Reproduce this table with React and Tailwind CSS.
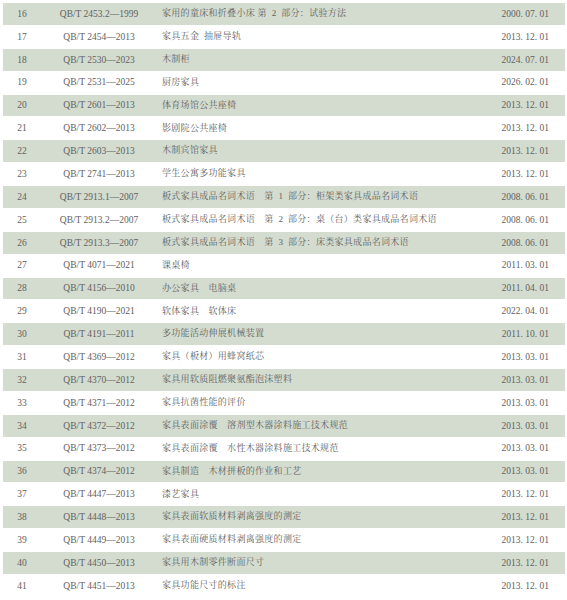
const S = "\u2002";
const rows = [
  ["16", "QB/T 2453.2—1999", `家用的童床和折叠小床 第${S}2${S}部分：试验方法`, "2000. 07. 01"],
  ["17", "QB/T 2454—2013", `家具五金${S}抽屉导轨`, "2013. 12. 01"],
  ["18", "QB/T 2530—2023", "木制柜", "2024. 07. 01"],
  ["19", "QB/T 2531—2025", "厨房家具", "2026. 02. 01"],
  ["20", "QB/T 2601—2013", "体育场馆公共座椅", "2013. 12. 01"],
  ["21", "QB/T 2602—2013", "影剧院公共座椅", "2013. 12. 01"],
  ["22", "QB/T 2603—2013", "木制宾馆家具", "2013. 12. 01"],
  ["23", "QB/T 2741—2013", "学生公寓多功能家具", "2013. 12. 01"],
  ["24", "QB/T 2913.1—2007", `板式家具成品名词术语　第${S}1${S}部分：柜架类家具成品名词术语`, "2008. 06. 01"],
  ["25", "QB/T 2913.2—2007", `板式家具成品名词术语　第${S}2${S}部分：桌（台）类家具成品名词术语`, "2008. 06. 01"],
  ["26", "QB/T 2913.3—2007", `板式家具成品名词术语　第${S}3${S}部分：床类家具成品名词术语`, "2008. 06. 01"],
  ["27", "QB/T 4071—2021", "课桌椅", "2011. 03. 01"],
  ["28", "QB/T 4156—2010", "办公家具　电脑桌", "2011. 04. 01"],
  ["29", "QB/T 4190—2021", "软体家具　软体床", "2022. 04. 01"],
  ["30", "QB/T 4191—2011", "多功能活动伸展机械装置", "2011. 10. 01"],
  ["31", "QB/T 4369—2012", "家具（板材）用蜂窝纸芯", "2013. 03. 01"],
  ["32", "QB/T 4370—2012", "家具用软质阻燃聚氨酯泡沫塑料", "2013. 03. 01"],
  ["33", "QB/T 4371—2012", "家具抗菌性能的评价", "2013. 03. 01"],
  ["34", "QB/T 4372—2012", "家具表面涂覆　溶剂型木器涂料施工技术规范", "2013. 03. 01"],
  ["35", "QB/T 4373—2012", "家具表面涂覆　水性木器涂料施工技术规范", "2013. 03. 01"],
  ["36", "QB/T 4374—2012", "家具制造　木材拼板的作业和工艺", "2013. 03. 01"],
  ["37", "QB/T 4447—2013", "漆艺家具", "2013. 12. 01"],
  ["38", "QB/T 4448—2013", "家具表面软质材料剥离强度的测定", "2013. 12. 01"],
  ["39", "QB/T 4449—2013", "家具表面硬质材料剥离强度的测定", "2013. 12. 01"],
  ["40", "QB/T 4450—2013", "家具用木制零件断面尺寸", "2013. 12. 01"],
  ["41", "QB/T 4451—2013", "家具功能尺寸的标注", "2013. 12. 01"],
];

export default function App() {
  return (
    <div
      className="w-[567px] h-[600px] bg-white pt-[3px] pl-[3px] pr-[2px] text-[9.5px] text-[#626262] overflow-hidden"
      style={{ fontFamily: '"Liberation Serif", "Noto Serif CJK SC", "Noto Sans CJK SC", serif' }}
    >
      <div className="flex flex-col gap-px">
        {rows.map((r, i) => (
          <div
            key={r[0]}
            className={
              "h-[21.88px] flex items-center " + (i % 2 === 0 ? "bg-[#d3dccf]" : "bg-white")
            }
          >
            <div className="w-[38px] text-center">{r[0]}</div>
            <div className="w-[116px] text-center">{r[1]}</div>
            <div className="flex-1 pl-[5px] text-[9px] tracking-[0.3px] whitespace-nowrap">{r[2]}</div>
            <div className="pr-[16px] text-right whitespace-nowrap">{r[3]}</div>
          </div>
        ))}
      </div>
    </div>
  );
}
